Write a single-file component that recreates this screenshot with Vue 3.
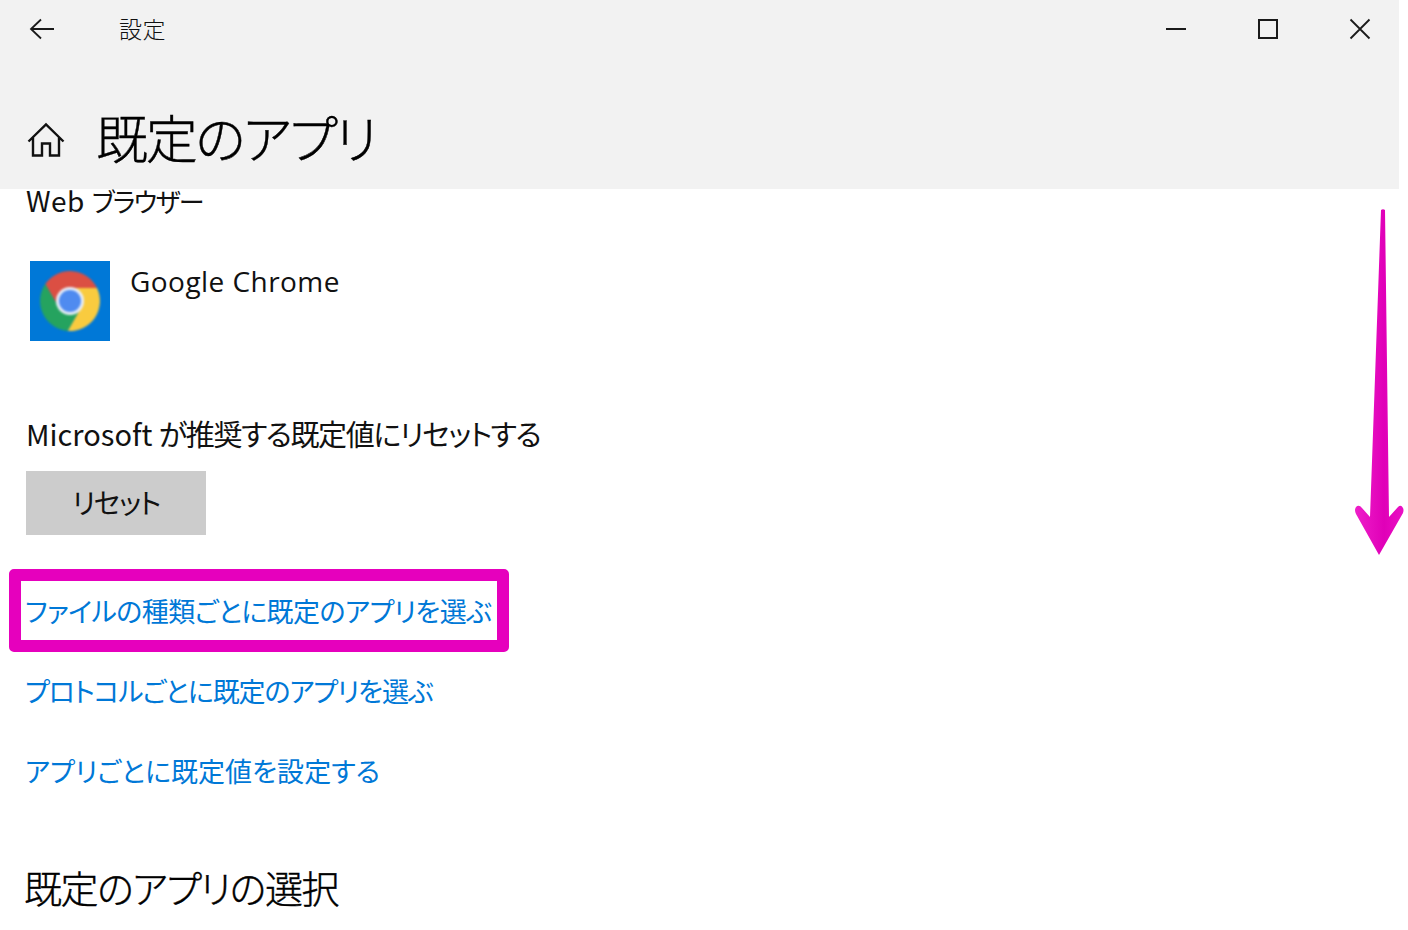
<script setup>
const links = [
  { text: 'ファイルの種類ごとに既定のアプリを選ぶ', marked: true, spacing: -0.55 },
  { text: 'プロトコルごとに既定のアプリを選ぶ', marked: false, spacing: -1.1 },
  { text: 'アプリごとに既定値を設定する', marked: false, spacing: 0.05 }
]
</script>

<template>
  <div class="page">
    <div class="window">
      <header class="head">
        <div class="titlebar">
          <svg class="back" width="26" height="22" viewBox="0 0 26 22" fill="none" stroke="#1a1a1a" stroke-width="1.8">
            <path d="M25 11H2M12 1.500 2 11l10 9.500" />
          </svg>
          <span class="apptitle">設定</span>
          <div class="controls">
            <svg width="22" height="22" viewBox="0 0 22 22" fill="none" stroke="#1a1a1a" stroke-width="2"><path d="M1 11h20" /></svg>
            <svg width="22" height="22" viewBox="0 0 22 22" fill="none" stroke="#1a1a1a" stroke-width="2"><rect x="2" y="2" width="18" height="18" /></svg>
            <svg width="22" height="22" viewBox="0 0 22 22" fill="none" stroke="#1a1a1a" stroke-width="1.8"><path d="M1.500 1.500l19 19M20.500 1.500l-19 19" /></svg>
          </div>
        </div>
        <div class="pagetitle">
          <svg class="home" width="38" height="36" viewBox="0 0 38 36" fill="none" stroke="#111" stroke-width="2.400">
            <path d="M1.500 19.500 19 2.500l17.500 17M6 15.500V33.500H15V21.500H23V33.500H32V15.500" />
          </svg>
          <h1>既定のアプリ</h1>
        </div>
      </header>

      <main class="content">
        <h2 class="group">Web <span class="group-jp">ブラウザー</span></h2>
        <div class="app">
          <div class="tile">
            <svg class="chrome" width="60" height="60" viewBox="0 0 60 60">
              <path d="M30 17H57A30 30 0 0 0 5.240 13.120L18.740 36.500Z" fill="#db4f43" />
              <path d="M18.740 36.500 5.240 13.120A30 30 0 0 0 27.760 59.900L41.260 36.500Z" fill="#25a35f" />
              <path d="M30 17H57A30 30 0 0 1 27.760 59.900L41.260 36.500Z" fill="#f9cb3f" />
              <circle cx="30" cy="30" r="14" fill="#e8eef8" />
              <circle cx="30" cy="30" r="11" fill="#4f8bf0" />
            </svg>
          </div>
          <span class="appname">Google Chrome</span>
        </div>

        <p class="reset-label">Microsoft <span class="label-jp">が推奨する既定値にリセットする</span></p>
        <button class="reset" type="button">リセット</button>

        <nav class="links">
          <a
            v-for="l in links"
            :key="l.text"
            class="link"
            :class="{ marked: l.marked }"
            :style="{ letterSpacing: l.spacing + 'px' }"
          >{{ l.text }}</a>
        </nav>

        <h2 class="section">既定のアプリの選択</h2>
      </main>
    </div>

    <svg class="arrow" width="52" height="350" viewBox="0 0 52 350">
      <defs>
        <linearGradient id="shaft" x1="0" y1="0" x2="1" y2="0">
          <stop offset="0" stop-color="#ee1fc9" />
          <stop offset="0.6" stop-color="#e000b8" />
          <stop offset="1" stop-color="#ea10c4" />
        </linearGradient>
      </defs>
      <path d="M27 1Q29-.5 31 1L35 308 44 298Q47 295 49 299 50 301 49 304L25 346 2 305Q0 301 2 298 5 295 8 299L16 308Z" fill="url(#shaft)" />
    </svg>
  </div>
</template>

<style>
html, body { margin: 0; background: #fff; }
</style>

<style scoped>
.page {
  position: relative;
  width: 1408px;
  height: 930px;
  overflow: hidden;
  background: #fff;
  font-family: "Noto Sans CJK JP", "Noto Sans", sans-serif;
  font-feature-settings: "palt";
  color: #111;
}
.window { width: 1399px; }
.head {
  height: 189px;
  background: #f2f2f2;
  display: flex;
  flex-direction: column;
}
.titlebar {
  height: 58px;
  display: flex;
  align-items: center;
  padding-left: 29px;
}
.back { flex: none; }
.apptitle {
  margin-left: 64px;
  margin-bottom: 2px;
  font-size: 23px;
  font-weight: 300;
  letter-spacing: 0.4px;
}
.controls {
  margin-left: auto;
  padding-right: 28px;
  display: flex;
  gap: 70px;
}
.pagetitle {
  display: flex;
  align-items: center;
  margin-top: 46px;
  padding-left: 27px;
}
.home { margin-top: 6px; }
h1 {
  margin: 0 0 0 31px;
  font-size: 52px;
  line-height: 66px;
  font-weight: 300;
  letter-spacing: -2.3px;
  color: #000;
  -webkit-text-stroke: 0.4px #000;
}
.content { padding-left: 26px; }
.group {
  margin: -4px 0 0;
  font-size: 28px;
  line-height: 30px;
  font-weight: 400;
  letter-spacing: 0.5px;
}
.group-jp { font-size: 26px; letter-spacing: -1.6px; }
.app {
  margin-top: 45px;
  padding-left: 4px;
  display: flex;
  gap: 20px;
}
.tile {
  width: 80px;
  height: 80px;
  background: #0078d7;
  display: flex;
  align-items: center;
  justify-content: center;
}
.chrome { filter: blur(1px); }
.appname {
  font-size: 28px;
  line-height: 40px;
  font-family: "Open Sans", sans-serif;
  letter-spacing: 0.45px;
}
.reset-label {
  margin: 72px 0 0;
  font-size: 29px;
  line-height: 40px;
}
.label-jp { letter-spacing: -1.4px; }
.reset {
  display: block;
  margin-top: 18px;
  width: 180px;
  height: 64px;
  padding: 0 0 2px;
  border: 0;
  background: #cccccc;
  color: #111;
  font: inherit;
  font-size: 28px;
  letter-spacing: -1.4px;
}
.links {
  margin-top: 56px;
  display: flex;
  flex-direction: column;
  gap: 40px;
  align-items: flex-start;
}
.link {
  position: relative;
  height: 40px;
  line-height: 40px;
  font-size: 27px;
  color: #0078d7;
  margin-left: -1px;
}
.marked::after {
  content: "";
  position: absolute;
  left: -16px;
  top: -22px;
  width: 476px;
  height: 59px;
  border: 12px solid #e600bd;
  border-radius: 5px;
}
.section {
  margin: 71px 0 0 -2px;
  font-size: 38px;
  line-height: 50px;
  font-weight: 300;
  letter-spacing: -1.4px;
  color: #000;
  -webkit-text-stroke: 0.4px #000;
}
.arrow {
  position: absolute;
  left: 1354px;
  top: 209px;
}
</style>
